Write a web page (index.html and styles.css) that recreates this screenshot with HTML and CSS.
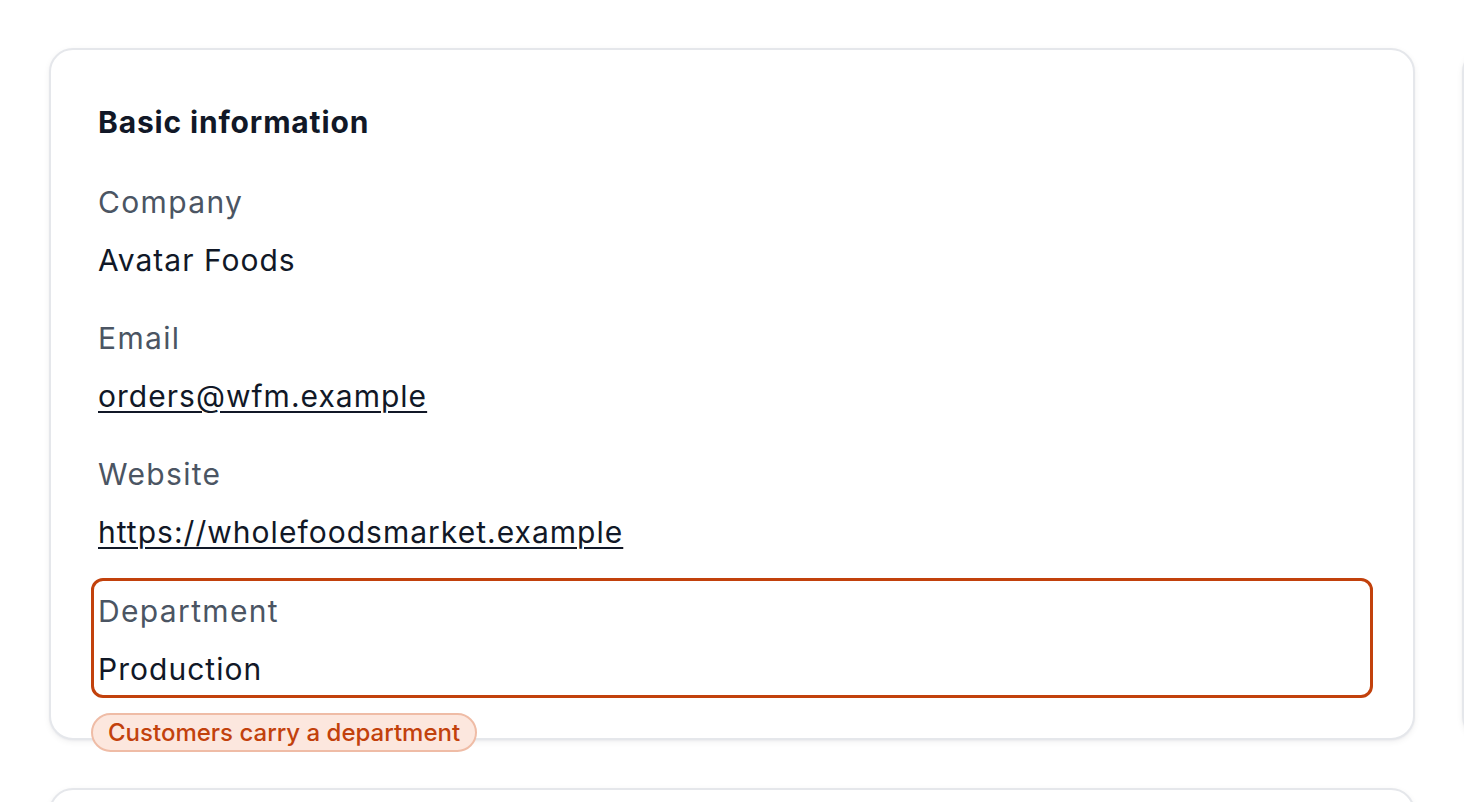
FILE: index.html
```html
<!DOCTYPE html>
<html lang="en">
<head>
<meta charset="utf-8">
<title>Basic information</title>
<link rel="stylesheet" href="styles.css">
</head>
<body>
<main class="page">
  <div class="grid">
    <section class="card">
      <h2 class="card-title">Basic information</h2>
      <div class="fields">
        <div class="field">
          <div class="label">Company</div>
          <div class="value">Avatar Foods</div>
        </div>
        <div class="field">
          <div class="label">Email</div>
          <div class="value"><a class="link" href="#">orders@wfm.example</a></div>
        </div>
        <div class="field">
          <div class="label">Website</div>
          <div class="value"><a class="link" href="#">https://wholefoodsmarket.example</a></div>
        </div>
        <div class="field field-flagged">
          <div class="label">Department</div>
          <div class="value">Production</div>
          <span class="flag">Customers carry a department</span>
        </div>
      </div>
    </section>
    <section class="card card-side"></section>
    <section class="card card-next"></section>
  </div>
</main>
</body>
</html>
```

FILE: styles.css
```css
* { box-sizing: border-box; }

html, body {
  margin: 0;
  padding: 0;
  background: #ffffff;
  overflow: hidden;
  height: 100%;
}

body {
  font-family: Inter, "Noto Sans", "Liberation Sans", sans-serif;
  color: #111827;
}

.page {
  padding: 48px 0 0 49px;
}

.grid {
  display: grid;
  grid-template-columns: 1366px 1366px;
  column-gap: 47px;
  row-gap: 48px;
}

.card {
  background: #ffffff;
  border: 2px solid #e5e7eb;
  border-radius: 24px;
  box-shadow: 0 2px 6px rgba(17, 24, 39, 0.06), 0 1px 2px rgba(17, 24, 39, 0.04);
  padding: 50px 47px 43px 47px;
  position: relative;
}

.card-side {
  min-height: 691px;
}

.card-next {
  min-height: 300px;
}

.card-title {
  margin: 0 0 36px 0;
  font-size: 30px;
  line-height: 45px;
  font-weight: 700;
  letter-spacing: 0.028em;
  color: #111827;
}

.fields {
  display: flex;
  flex-direction: column;
  gap: 36px;
}

.field {
  display: flex;
  flex-direction: column;
  gap: 16px;
  position: relative;
}

.label {
  font-size: 30px;
  line-height: 42px;
  letter-spacing: 0.045em;
  color: #4b5563;
}

.value {
  font-size: 30px;
  line-height: 42px;
  letter-spacing: 0.034em;
  color: #111827;
}

.link {
  color: #111827;
  text-decoration: underline;
  text-underline-offset: 4px;
  text-decoration-thickness: 1.5px;
}

.field-flagged {
  border: 3px solid #c2410c;
  border-radius: 12px;
  padding: 9px 4px 5px 4px;
  margin: -11px -7px -3px -7px;
}

.flag {
  position: absolute;
  left: -3px;
  top: calc(100% + 18px);
  display: inline-block;
  padding: 2px 15px;
  font-size: 24px;
  line-height: 31px;
  font-weight: 500;
  color: #c2410c;
  background: #fce7de;
  border: 2px solid #efbca6;
  border-radius: 999px;
  white-space: nowrap;
}
```
